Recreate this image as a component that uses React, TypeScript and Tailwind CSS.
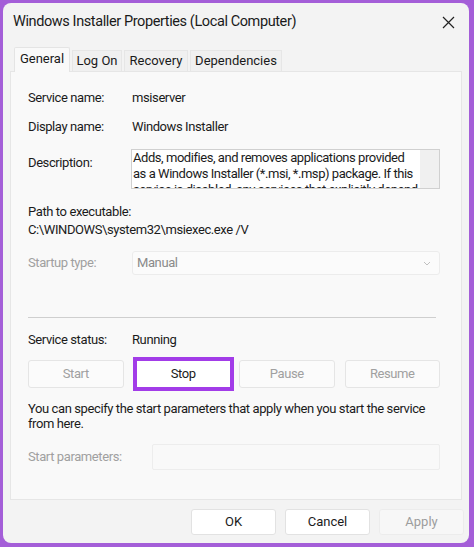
import React from 'react';

const font = { fontFamily: 'Roboto, "Liberation Sans", Arial, sans-serif' };

function Btn({ label, disabled }: { label: string; disabled?: boolean }) {
  return (
    <div
      className={`h-[28px] flex items-center justify-center rounded-[3px] border border-[#e5e5e5] bg-[#fbfbfb] text-[13px] ${
        disabled ? 'text-[#a0a0a0]' : 'text-[#1b1b1b]'
      }`}
    >
      {label}
    </div>
  );
}

const descLines = [
  'Adds, modifies, and removes applications provided',
  'as a Windows Installer (*.msi, *.msp) package. If this',
  'service is disabled, any services that explicitly depend',
];

export default function App() {
  return (
    <div className="w-[474px] h-[547px] bg-[#a45ed8] p-[3px] tracking-[-0.4px]" style={font}>
      <div className="w-[466px] h-[540px] bg-[#f3f3f3] rounded-[8px] flex flex-col overflow-hidden">
        {/* Title bar */}
        <div className="h-[38px] shrink-0 flex items-center justify-between pl-[10px] pr-[12px]">
          <span className="text-[14.5px] tracking-[-0.4px] text-[#1a1a1a]">Windows Installer Properties (Local Computer)</span>
          <svg width="13" height="13" viewBox="0 0 13 13" className="mr-[2px]">
            <path d="M1 1L12 12M12 1L1 12" stroke="#222" strokeWidth="1.2" />
          </svg>
        </div>

        {/* Tabs */}
        <div className="flex items-end pl-[11px] h-[30px] shrink-0 text-[13px] text-[#1a1a1a] gap-[2px] tracking-normal">
          <div className="h-[25px] w-[56px] justify-center flex items-center pb-[2px] bg-[#f9f9f9] border border-b-0 border-[#e4e4e4] rounded-t-[2px] -mb-px relative z-10">
            General
          </div>
          <div className="h-[21px] w-[50px] justify-center flex items-center bg-[#f0f0f0] border border-b-0 border-[#e6e6e6]">Log On</div>
          <div className="h-[21px] w-[64px] justify-center flex items-center bg-[#f0f0f0] border border-b-0 border-[#e6e6e6]">Recovery</div>
          <div className="h-[21px] w-[92px] justify-center flex items-center bg-[#f0f0f0] border border-b-0 border-[#e6e6e6]">Dependencies</div>
        </div>

        {/* Tab page */}
        <div className="mx-[7px] h-[429px] shrink-0 bg-[#f9f9f9] border border-[#e6e6e6] text-[13px] text-[#1b1b1b] pl-[17px] pr-[21px]">
          <div className="flex leading-[18px] mt-[17px]">
            <span className="w-[104px]">Service name:</span>
            <span>msiserver</span>
          </div>
          <div className="flex leading-[18px] mt-[11px]">
            <span className="w-[104px]">Display name:</span>
            <span>Windows Installer</span>
          </div>
          <div className="flex mt-[13px]">
            <span className="w-[103px] pt-[5px] leading-[18px]">Description:</span>
            <div className="flex-1 h-[40px] border border-[#d0d0d0] bg-white flex overflow-hidden">
              <div className="flex-1 pl-[1px] leading-[16px] text-[13px] tracking-[-0.45px] overflow-hidden">
                {descLines.map((l) => (
                  <div key={l} className="whitespace-nowrap">{l}</div>
                ))}
              </div>
              <div className="w-[19px] bg-[#f0f0f0] shrink-0" />
            </div>
          </div>
          <div className="mt-[14px] leading-[18px]">Path to executable:</div>
          <div className="leading-[18px]">C:\WINDOWS\system32\msiexec.exe /V</div>

          <div className="flex items-center mt-[12px]">
            <span className="w-[104px] text-[#a0a0a0]">Startup type:</span>
            <div className="flex-1 h-[24px] border border-[#ececec] bg-[#fbfbfb] flex items-center justify-between pl-[4px] pr-[8px] text-[#8a8a8a] rounded-[3px]">
              <span>Manual</span>
              <svg width="8" height="5" viewBox="0 0 8 5">
                <path d="M1 1L4 4L7 1" stroke="#c0c0c0" fill="none" strokeWidth="1" />
              </svg>
            </div>
          </div>

          <div className="mt-[42px] h-px bg-[#cfcfcf] mr-[4px]" />

          <div className="flex mt-[13px] leading-[18px]">
            <span className="w-[104px]">Service status:</span>
            <span>Running</span>
          </div>

          <div className="grid grid-cols-4 gap-[10px] mt-[11px] items-center">
            <Btn label="Start" disabled />
            <div className="border-[4px] border-[#a23ce8] -ml-[1px] -mr-[5px] -my-[3px]">
              <div className="h-[26px] flex items-center justify-center bg-white text-[13px] text-[#1b1b1b]">Stop</div>
            </div>
            <Btn label="Pause" disabled />
            <Btn label="Resume" disabled />
          </div>

          <div className="mt-[13px] leading-[15px]">
            You can specify the start parameters that apply when you start the service from here.
          </div>

          <div className="flex items-center mt-[13px]">
            <span className="w-[124px] text-[#a0a0a0]">Start parameters:</span>
            <div className="flex-1 h-[26px] border border-[#ededed] bg-[#f9f9f9] rounded-[2px]" />
          </div>
        </div>

        {/* Footer */}
        <div className="flex-1 flex justify-end items-center gap-[9px] pr-[5px] text-[13px] tracking-normal">
          <div className="w-[85px] h-[26px] flex items-center justify-center bg-white border border-[#e2e2e2] rounded-[3px] text-[#1b1b1b]">OK</div>
          <div className="w-[85px] h-[26px] flex items-center justify-center bg-white border border-[#e2e2e2] rounded-[3px] text-[#1b1b1b]">Cancel</div>
          <div className="w-[85px] h-[26px] flex items-center justify-center bg-[#f7f7f7] border border-[#ececec] rounded-[3px] text-[#9d9d9d]">Apply</div>
        </div>
      </div>
    </div>
  );
}
